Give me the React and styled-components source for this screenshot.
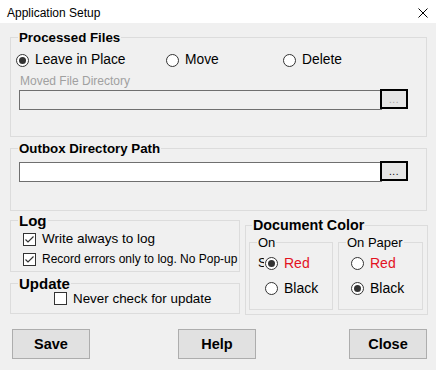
import React from 'react';
import styled, { createGlobalStyle } from 'styled-components';

const GlobalStyle = createGlobalStyle`
  html, body { margin: 0; padding: 0; background: #f0f0f0; }
  * { box-sizing: border-box; }
`;

const Window = styled.div`
  width: 436px;
  height: 370px;
  background: #f0f0f0;
  display: flex;
  flex-direction: column;
  font-family: "Liberation Sans", Arial, sans-serif;
  color: #000;
  overflow: hidden;
`;

const TitleBar = styled.div`
  height: 23px;
  flex: none;
  background: #fff;
  display: flex;
  align-items: center;
  justify-content: space-between;
  padding: 3px 8px 0 7px;
`;

const TitleText = styled.span`
  font-size: 12px;
  line-height: 14px;
`;

const CloseGlyph = styled.svg`
  width: 10px;
  height: 10px;
  display: block;
`;

const Body = styled.div`
  flex: 1;
  display: flex;
  flex-direction: column;
  padding: 7px 9px 0 10px;
`;

const Group = styled.fieldset`
  margin: ${p => p.$margin || '0'};
  padding: ${p => p.$pad || '0'};
  border: 1px solid #dcdcdc;
  min-width: 0;
  flex: ${p => p.$flex || 'none'};
  display: flex;
  flex-direction: ${p => (p.$row ? 'row' : 'column')};
  gap: ${p => p.$gap || 0}px;
`;

const Legend = styled.legend`
  margin-left: ${p => p.$indent ?? 7}px;
  padding: 0 1px;
  font-weight: ${p => (p.$bold ? 700 : 400)};
  font-size: ${p => p.$size}px;
  line-height: ${p => p.$lh}px;
`;

const RadioGrid = styled.div`
  display: grid;
  grid-template-columns: 150px 117px auto;
  padding-left: 5px;
`;

const Option = styled.label`
  display: flex;
  align-items: center;
  height: ${p => p.$h || 16}px;
  gap: ${p => p.$gap ?? 6}px;
  margin-left: ${p => p.$indent || 0}px;
  margin-top: ${p => p.$top || 0}px;
`;

const RadioDot = styled.span`
  width: 13px;
  height: 13px;
  flex: none;
  border: 1px solid #333;
  border-radius: 50%;
  background: #fff;
  display: flex;
  align-items: center;
  justify-content: center;
  &::after {
    content: '';
    width: 7px;
    height: 7px;
    border-radius: 50%;
    background: #333;
    display: ${p => (p.$checked ? 'block' : 'none')};
  }
`;

const CheckBox = styled.span`
  width: 13px;
  height: 13px;
  flex: none;
  border: 1px solid #333;
  background: #fff;
  display: flex;
  align-items: center;
  justify-content: center;
`;

const Text = styled.span`
  font-size: ${p => p.$size || 13.8}px;
  line-height: 16px;
  color: ${p => p.$color || '#000'};
  white-space: nowrap;
`;

const HiddenTail = styled.span`
  width: 6px;
  overflow: hidden;
  flex: none;
  font-size: 13px;
  line-height: 16px;
  white-space: nowrap;
  margin-left: 8px;
  margin-right: -5px;
`;

const FieldLabel = styled.div`
  font-size: 12px;
  line-height: 14px;
  color: #a0a0a0;
  margin: 6px 0 1px 9px;
`;

const InputRow = styled.div`
  display: flex;
  align-items: flex-start;
  padding-left: 8px;
`;

const TextBox = styled.div`
  width: 363px;
  height: 20px;
  margin-top: 1px;
  border: 1px solid #6f6f6f;
  background: ${p => (p.$disabled ? '#f0f0f0' : '#fff')};
`;

const BrowseButton = styled.button`
  position: relative;
  z-index: 1;
  width: 28px;
  height: 20px;
  margin-left: -2px;
  padding: 0 0 3px;
  border: 1px solid #000;
  box-shadow: inset 0 0 0 1px #000;
  background: #e5e5e5;
  font-family: "Liberation Sans", Arial, sans-serif;
  font-size: 10px;
  line-height: 10px;
  letter-spacing: 0.5px;
  color: ${p => (p.$disabled ? '#a0a0a0' : '#000')};
  display: flex;
  align-items: flex-end;
  justify-content: center;
`;

const LowerRow = styled.div`
  display: flex;
  gap: 5px;
  margin-top: 1px;
`;

const LeftCol = styled.div`
  width: 230px;
  display: flex;
  flex-direction: column;
`;

const SubGroups = styled.div`
  display: flex;
  gap: 5px;
  padding: 1px 4px 0 3px;
`;

const ButtonRow = styled.div`
  display: flex;
  justify-content: space-between;
  margin: 14px 0 0 2px;
`;

const ActionButton = styled.button`
  width: 78px;
  height: 30px;
  margin-right: ${p => p.$shift || 0}px;
  border: 1px solid #adadad;
  background: #e1e1e1;
  font-family: "Liberation Sans", Arial, sans-serif;
  font-weight: 700;
  font-size: 14.5px;
  color: #000;
  padding: 0;
`;

const Check = () => (
  <svg width="11" height="11" viewBox="0 0 11 11">
    <polyline points="1.5,5.5 4,8 9.5,2.5" fill="none" stroke="#333" strokeWidth="1.2" />
  </svg>
);

const Radio = ({ checked, label, color, size, indent, top, gap }) => (
  <Option $indent={indent} $top={top} $gap={gap}>
    <RadioDot $checked={checked} />
    <Text $color={color} $size={size}>{label}</Text>
  </Option>
);

const CheckOption = ({ checked, label, size, indent, h }) => (
  <Option $indent={indent} $h={h}>
    <CheckBox>{checked && <Check />}</CheckBox>
    <Text $size={size}>{label}</Text>
  </Option>
);

const RED = '#e3121e';

export default function App() {
  return (
    <>
      <GlobalStyle />
      <Window>
        <TitleBar>
          <TitleText>Application Setup</TitleText>
          <CloseGlyph viewBox="0 0 10 10">
            <path d="M0.5 0.5 L9.5 9.5 M9.5 0.5 L0.5 9.5" stroke="#000" strokeWidth="1" />
          </CloseGlyph>
        </TitleBar>
        <Body>
          <Group $pad="7px 0 26px 0">
            <Legend $bold $size={13.3} $lh={15}>Processed Files</Legend>
            <RadioGrid>
              <Radio checked label="Leave in Place" />
              <Radio label="Move" />
              <Radio label="Delete" />
            </RadioGrid>
            <FieldLabel>Moved File Directory</FieldLabel>
            <InputRow>
              <TextBox $disabled />
              <BrowseButton $disabled>...</BrowseButton>
            </InputRow>
          </Group>

          <Group $margin="4px 0 0" $pad="5px 0 28px 0">
            <Legend $bold $size={13.3} $lh={15}>Outbox Directory Path</Legend>
            <InputRow>
              <TextBox />
              <BrowseButton>...</BrowseButton>
            </InputRow>
          </Group>

          <LowerRow>
            <LeftCol>
              <Group $pad="0 0 2px 0">
                <Legend $bold $size={15} $lh={17}>Log</Legend>
                <CheckOption checked indent={12} h={20} size={13.5} label="Write always to log" />
                <CheckOption checked indent={12} h={20} size={12} label="Record errors only to log. No Pop-up" />
              </Group>
              <Group $margin="3px 0 0" $pad="0 0 8px 0">
                <Legend $bold $size={15} $lh={17}>Update</Legend>
                <CheckOption indent={43} h={13} size={13.4} label="Never check for update" />
              </Group>
            </LeftCol>

            <Group $margin="5px -1px 0 0" $pad="0 0 4px 0" $flex="1">
              <Legend $bold $size={14.3} $lh={17} $indent={6}>Document Color</Legend>
              <SubGroups>
                <Group $pad="5px 0 13px 0" $flex="0 0 84px">
                  <Legend $size={13} $lh={15}>On</Legend>
                  <Option $h={16}>
                    <HiddenTail>Screen</HiddenTail>
                    <RadioDot $checked />
                    <Text $color={RED} $size={14}>Red</Text>
                  </Option>
                  <Radio indent={15} top={9} gap={6} size={14} label="Black" />
                </Group>
                <Group $pad="5px 0 13px 0" $flex="1">
                  <Legend $size={13} $lh={15}>On Paper</Legend>
                  <Radio indent={12} gap={6} size={14} color={RED} label="Red" />
                  <Radio checked indent={12} top={9} gap={6} size={14} label="Black" />
                </Group>
              </SubGroups>
            </Group>
          </LowerRow>

          <ButtonRow>
            <ActionButton>Save</ActionButton>
            <ActionButton $shift={5}>Help</ActionButton>
            <ActionButton>Close</ActionButton>
          </ButtonRow>
        </Body>
      </Window>
    </>
  );
}
